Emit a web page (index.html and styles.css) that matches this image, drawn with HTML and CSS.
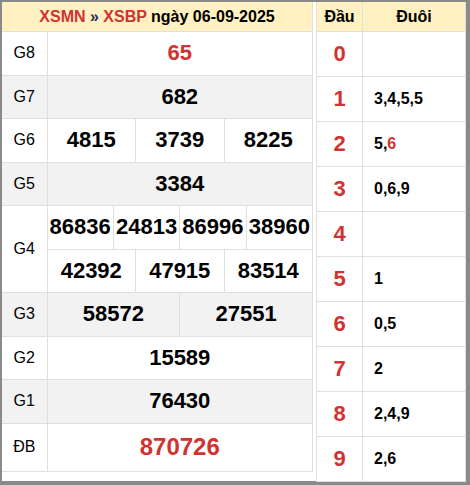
FILE: index.html
```html
<!DOCTYPE html>
<html lang="vi">
<head>
<meta charset="utf-8">
<link rel="stylesheet" href="styles.css">
</head>
<body>
<div class="frame">
  <table class="kq">
    <colgroup>
      <col class="c-label">
      <col><col><col><col><col><col><col><col><col><col><col><col>
    </colgroup>
    <thead>
      <tr><th colspan="13" class="title"><span class="red">XSMN</span> <span class="sep">»</span> <span class="red">XSBP</span> ngày 06-09-2025</th></tr>
    </thead>
    <tbody>
      <tr class="r"><td class="lbl">G8</td><td colspan="12" class="num red">65</td></tr>
      <tr class="r alt"><td class="lbl">G7</td><td colspan="12" class="num">682</td></tr>
      <tr class="r"><td class="lbl">G6</td><td colspan="4" class="num">4815</td><td colspan="4" class="num">3739</td><td colspan="4" class="num">8225</td></tr>
      <tr class="r alt"><td class="lbl">G5</td><td colspan="12" class="num">3384</td></tr>
      <tr class="r"><td class="lbl" rowspan="2">G4</td><td colspan="3" class="num">86836</td><td colspan="3" class="num">24813</td><td colspan="3" class="num">86996</td><td colspan="3" class="num">38960</td></tr>
      <tr class="r"><td colspan="4" class="num">42392</td><td colspan="4" class="num">47915</td><td colspan="4" class="num">83514</td></tr>
      <tr class="r alt"><td class="lbl">G3</td><td colspan="6" class="num">58572</td><td colspan="6" class="num">27551</td></tr>
      <tr class="r"><td class="lbl">G2</td><td colspan="12" class="num">15589</td></tr>
      <tr class="r alt"><td class="lbl">G1</td><td colspan="12" class="num">76430</td></tr>
      <tr class="r db"><td class="lbl">ĐB</td><td colspan="12" class="num red big">870726</td></tr>
    </tbody>
  </table>
  <table class="lt">
    <colgroup><col class="c-dau"><col></colgroup>
    <thead>
      <tr><th>Đầu</th><th>Đuôi</th></tr>
    </thead>
    <tbody>
      <tr><td class="dau">0</td><td class="duoi"></td></tr>
      <tr><td class="dau">1</td><td class="duoi">3,4,5,5</td></tr>
      <tr><td class="dau">2</td><td class="duoi">5,<span class="red">6</span></td></tr>
      <tr><td class="dau">3</td><td class="duoi">0,6,9</td></tr>
      <tr><td class="dau">4</td><td class="duoi"></td></tr>
      <tr><td class="dau">5</td><td class="duoi">1</td></tr>
      <tr><td class="dau">6</td><td class="duoi">0,5</td></tr>
      <tr><td class="dau">7</td><td class="duoi">2</td></tr>
      <tr><td class="dau">8</td><td class="duoi">2,4,9</td></tr>
      <tr><td class="dau">9</td><td class="duoi">2,6</td></tr>
    </tbody>
  </table>
</div>
</body>
</html>
```

FILE: styles.css
```css
html, body {
  margin: 0;
  padding: 0;
  background: #ffffff;
}
body {
  font-family: "Liberation Sans", Arial, sans-serif;
  color: #000;
}
.frame {
  width: 464px;
  height: 479px;
  border-style: solid;
  border-color: #8a8a8a;
  border-width: 2px 4px 4px 2px;
  display: flex;
  align-items: flex-start;
  gap: 3px;
  background: #fff;
}
table {
  border-collapse: collapse;
  table-layout: fixed;
}
td, th {
  padding: 0;
  border: 1px solid #e3dfd8;
}
.red { color: #d13232; }
.kq {
  width: 311px;
  border-left: none;
  border-top: none;
}
.kq col.c-label { width: 45px; }
.kq th.title {
  height: 29px;
  background: #fff1c2;
  font-size: 16px;
  font-weight: bold;
  text-align: center;
  border-left: none;
  border-top: none;
}
.kq .sep { color: #1c2b5c; }
.kq tr.r td { height: 42.5px; }
.kq tr.db td { height: 47px; }
.kq tr.alt td { background: #f2f2f2; }
.kq td.lbl {
  font-size: 16px;
  text-align: center;
  border-left: none;
}
.kq td.num {
  font-size: 22px;
  font-weight: bold;
  text-align: center;
  white-space: nowrap;
}
.kq td.big { font-size: 24px; }
.lt {
  width: 150px;
}
.lt col.c-dau { width: 46px; }
.lt th {
  height: 29px;
  background: #fff1c2;
  font-size: 16px;
  font-weight: bold;
  text-align: center;
  border-top: none;
}
.lt td { height: 44px; }
.lt td.dau {
  font-size: 22px;
  font-weight: bold;
  color: #d13232;
  text-align: center;
}
.lt td.duoi {
  font-size: 16px;
  font-weight: bold;
  padding-left: 11px;
}
```
